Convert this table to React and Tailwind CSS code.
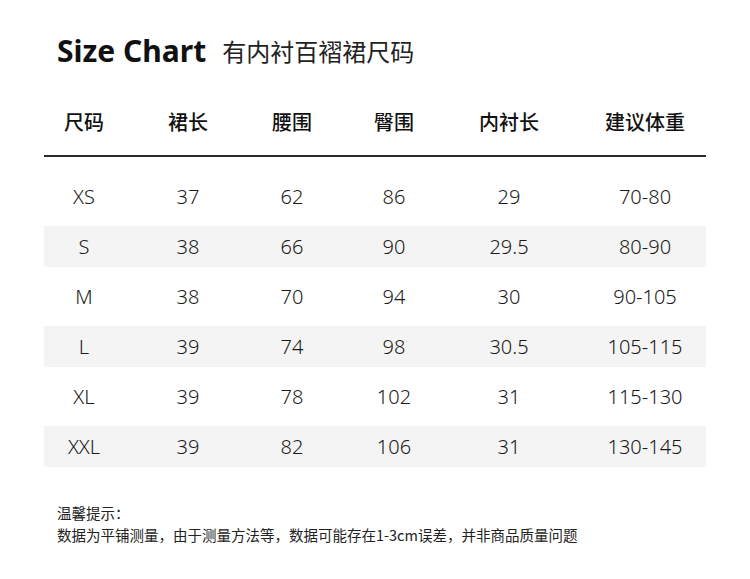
import React from 'react';

const headers = ['尺码', '裙长', '腰围', '臀围', '内衬长', '建议体重'];

const rows = [
  ['XS', '37', '62', '86', '29', '70-80'],
  ['S', '38', '66', '90', '29.5', '80-90'],
  ['M', '38', '70', '94', '30', '90-105'],
  ['L', '39', '74', '98', '30.5', '105-115'],
  ['XL', '39', '78', '102', '31', '115-130'],
  ['XXL', '39', '82', '106', '31', '130-145'],
];

const cols = 'grid grid-cols-[80px_128px_80px_124px_106px_1fr] items-center';

const App = () => {
  return (
    <div className="w-[750px] h-[579px] bg-white overflow-hidden font-['Noto_Sans','Noto_Sans_CJK_SC',sans-serif]">
      <div className="pt-[31px] pl-[57px] flex items-center h-[71px]">
        <span className="text-[30px] font-bold text-[#111] leading-[40px]">Size Chart</span>
        <span className="ml-[16px] text-[24px] text-[#222] leading-[40px] font-['Noto_Sans_CJK_SC',sans-serif]">有内衬百褶裙尺码</span>
      </div>

      <div className="ml-[44px] w-[662px]">
        <div className={`${cols} mt-[31px] h-[40px] text-[20px] font-medium text-[#111] font-['Noto_Sans_CJK_SC',sans-serif]`}>
          {headers.map((h, i) => (
            <div key={h} className={i === 5 ? 'text-center pl-[22px]' : 'text-center'}>{h}</div>
          ))}
        </div>
        <div className="mt-[13px] h-[2px] bg-[#2a2a2a]" />

        <div className="mt-[19px] flex flex-col gap-[9px]">
          {rows.map((r, ri) => (
            <div key={r[0]} className={`${cols} h-[41px] text-[20px] font-light text-[#1a1a1a] ${ri % 2 === 1 ? 'bg-[#f4f4f4]' : ''}`}>
              {r.map((c, i) => (
                <div key={i} className={i === 5 ? 'text-center pl-[22px]' : 'text-center'}>{c}</div>
              ))}
            </div>
          ))}
        </div>
      </div>

      <div className="mt-[35px] pl-[57px] text-[14.5px] leading-[22px] text-[#222] font-['Noto_Sans_CJK_SC',sans-serif]">
        <div>温馨提示：</div>
        <div>数据为平铺测量，由于测量方法等，数据可能存在1-3cm误差，并非商品质量问题</div>
      </div>
    </div>
  );
};

export default App;
